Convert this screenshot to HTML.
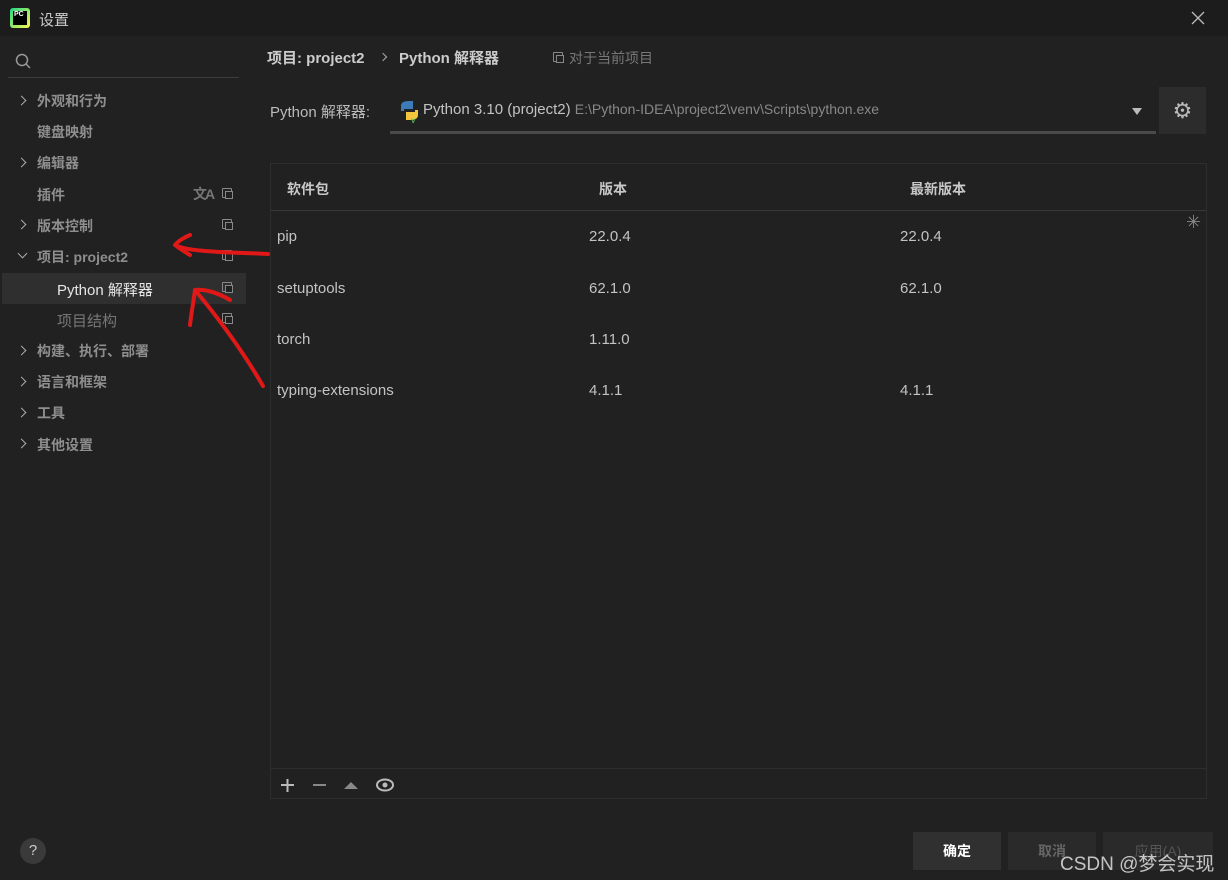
<!DOCTYPE html>
<html><head><meta charset="utf-8"><style>
*{margin:0;padding:0;box-sizing:border-box}
body{width:1228px;height:880px;background:#212121;font-family:"Liberation Sans","Noto Sans CJK SC",sans-serif;color:#bbb;position:relative;overflow:hidden;font-size:14px}
.a{position:absolute;white-space:nowrap}
.nav{color:#8e8e8e;font-weight:bold;font-size:14px}
.cp{position:absolute;width:10px;height:10px;border:1.5px solid #888;border-radius:1px}
.cp:after{content:"";position:absolute;left:2px;top:2px;width:6px;height:6px;border:1.5px solid #888;background:#212121}
.chev{position:absolute;width:7px;height:7px;border-right:1.6px solid #aaa;border-bottom:1.6px solid #aaa}
.row{position:absolute;left:277px;font-size:15px;color:#c3c3c3}
</style></head><body>
<div class="a" style="left:0;top:0;width:1228px;height:36px;background:#1c1c1c"></div>
<div class="a" style="left:10px;top:8px;width:20px;height:20px;background:linear-gradient(135deg,#21d789,#fcf84a);border-radius:3px"></div>
<div class="a" style="left:13px;top:11px;width:14px;height:14px;background:#000;color:#fff;font-size:7px;font-weight:bold;padding-left:1px">PC</div>
<div class="a" style="left:39px;top:9px;color:#ccc;font-size:15px">设置</div>
<svg class="a" style="left:1191px;top:11px" width="14" height="14"><path d="M1 1L13 13M13 1L1 13" stroke="#bbb" stroke-width="1.3"/></svg>
<svg class="a" style="left:15px;top:53px" width="18" height="18"><circle cx="7" cy="7" r="5.5" stroke="#999" stroke-width="1.5" fill="none"/><line x1="11" y1="11" x2="15" y2="15" stroke="#999" stroke-width="1.5"/></svg>
<div class="a" style="left:8px;top:77px;width:231px;height:1px;background:#3c3c3c"></div>
<div class="chev" style="left:18px;top:97px;transform:rotate(-45deg)"></div>
<div class="a nav" style="left:37px;top:91px">外观和行为</div>
<div class="a nav" style="left:37px;top:122px">键盘映射</div>
<div class="chev" style="left:18px;top:159px;transform:rotate(-45deg)"></div>
<div class="a nav" style="left:37px;top:153px">编辑器</div>
<div class="a nav" style="left:37px;top:185px">插件</div>
<div class="a" style="left:193px;top:184px;color:#777;font-size:14px;font-weight:bold;letter-spacing:-2px">文A</div>
<div class="chev" style="left:18px;top:221px;transform:rotate(-45deg)"></div>
<div class="a nav" style="left:37px;top:216px">版本控制</div>
<div class="chev" style="left:19px;top:250px;transform:rotate(45deg)"></div>
<div class="a nav" style="left:37px;top:247px">项目: project2</div>
<div class="a" style="left:2px;top:273px;width:244px;height:31px;background:#2f2f2f"></div>
<div class="a" style="left:57px;top:279px;color:#e6e6e6;font-size:15px">Python 解释器</div>
<div class="a" style="left:57px;top:310px;color:#777;font-size:15px">项目结构</div>
<div class="chev" style="left:18px;top:347px;transform:rotate(-45deg)"></div>
<div class="a nav" style="left:37px;top:341px">构建、执行、部署</div>
<div class="chev" style="left:18px;top:378px;transform:rotate(-45deg)"></div>
<div class="a nav" style="left:37px;top:372px">语言和框架</div>
<div class="chev" style="left:18px;top:409px;transform:rotate(-45deg)"></div>
<div class="a nav" style="left:37px;top:403px">工具</div>
<div class="chev" style="left:18px;top:440px;transform:rotate(-45deg)"></div>
<div class="a nav" style="left:37px;top:435px">其他设置</div>
<div class="cp" style="left:222px;top:188px"></div>
<div class="cp" style="left:222px;top:219px"></div>
<div class="cp" style="left:222px;top:250px"></div>
<div class="cp" style="left:222px;top:282px"></div>
<div class="cp" style="left:222px;top:313px"></div>
<div class="a" style="left:20px;top:838px;width:26px;height:26px;border-radius:50%;background:#3a3a3a;color:#ccc;text-align:center;line-height:26px;font-size:15px">?</div>
<svg class="a" style="left:160px;top:225px" width="120" height="175"><path d="M108 29 C90 28 70 28 45 26 C35 25 22 24 15 20 M15 20 C18 16 25 12 30 10 M15 20 C20 24 25 27 30 30" stroke="#e01818" stroke-width="4" fill="none" stroke-linecap="round"/><path d="M103 161 C85 130 60 95 35 65 M35 65 C33 80 31 90 30 100 M35 65 C42 64 55 66 70 75" stroke="#e01818" stroke-width="4" fill="none" stroke-linecap="round"/></svg>
<div class="a" style="left:267px;top:47px;color:#ccc;font-weight:bold;font-size:15px">项目: project2</div>
<div class="chev" style="left:380px;top:54px;transform:rotate(-45deg);width:6px;height:6px"></div>
<div class="a" style="left:399px;top:47px;color:#ccc;font-weight:bold;font-size:15px">Python 解释器</div>
<div class="cp" style="left:553px;top:52px"></div>
<div class="a" style="left:569px;top:48px;color:#777;font-size:14px">对于当前项目</div>
<div class="a" style="left:270px;top:101px;color:#bbb;font-size:15px">Python 解释器:</div>
<div class="a" style="left:390px;top:131px;width:766px;height:3px;background:#4a4a4a"></div>
<svg class="a" style="left:399px;top:100px" width="22" height="24"><path d="M10 1h4v8H5v2H2V6c0-3 2-5 8-5z" fill="#3d7ab8"/><path d="M11 20H7v-8h9V10h3v5c0 3-2 5-8 5z" fill="#f2c53d"/><text x="12" y="23" fill="#6c6" font-size="9">v</text></svg>
<div class="a" style="left:423px;top:101px;color:#c3c3c3;font-size:15px">Python 3.10 (project2) <span style="color:#888;font-size:14px">E:\Python-IDEA\project2\venv\Scripts\python.exe</span></div>
<div class="a" style="left:1132px;top:108px;width:0;height:0;border-left:5px solid transparent;border-right:5px solid transparent;border-top:7px solid #bbb"></div>
<div class="a" style="left:1159px;top:87px;width:47px;height:47px;background:#2c2c2c;color:#bbb;font-size:22px;text-align:center;line-height:47px">⚙</div>
<div class="a" style="left:270px;top:163px;width:937px;height:636px;border:1px solid #2e2e2e;background:#212121"></div>
<div class="a" style="left:271px;top:210px;width:935px;height:1px;background:#383838"></div>
<div class="a" style="left:287px;top:179px;color:#c8c8c8;font-weight:bold">软件包</div>
<div class="a" style="left:599px;top:179px;color:#c8c8c8;font-weight:bold">版本</div>
<div class="a" style="left:910px;top:179px;color:#c8c8c8;font-weight:bold">最新版本</div>
<div class="a" style="left:1186px;top:212px;color:#888;font-size:18px">✳</div>
<div class="row" style="top:228px">pip</div><div class="row" style="left:589px;top:228px">22.0.4</div><div class="row" style="left:900px;top:228px">22.0.4</div>
<div class="row" style="top:280px">setuptools</div><div class="row" style="left:589px;top:280px">62.1.0</div><div class="row" style="left:900px;top:280px">62.1.0</div>
<div class="row" style="top:331px">torch</div><div class="row" style="left:589px;top:331px">1.11.0</div>
<div class="row" style="top:382px">typing-extensions</div><div class="row" style="left:589px;top:382px">4.1.1</div><div class="row" style="left:900px;top:382px">4.1.1</div>
<div class="a" style="left:271px;top:768px;width:935px;height:1px;background:#2e2e2e"></div>
<svg class="a" style="left:278px;top:776px" width="130" height="18"><path d="M3 9h13M9.5 3v13" stroke="#bbb" stroke-width="2"/><path d="M35 9h13" stroke="#888" stroke-width="2"/><path d="M66 13l7-7 7 7z" fill="#888"/><ellipse cx="107" cy="9" rx="8" ry="5.5" stroke="#bbb" stroke-width="2" fill="none"/><circle cx="107" cy="9" r="2.5" fill="#bbb"/></svg>
<div class="a" style="left:913px;top:832px;width:88px;height:38px;background:#303030;color:#fff;font-weight:bold;text-align:center;line-height:38px">确定</div>
<div class="a" style="left:1008px;top:832px;width:88px;height:38px;background:#2a2a2a;color:#666;font-weight:bold;text-align:center;line-height:38px">取消</div>
<div class="a" style="left:1103px;top:832px;width:110px;height:38px;background:#2a2a2a;color:#555;text-align:center;line-height:38px">应用(A)</div>
<div class="a" style="left:1060px;top:849px;color:#e0e0e0;font-size:19px;opacity:.85">CSDN @梦会实现</div>
</body></html>
